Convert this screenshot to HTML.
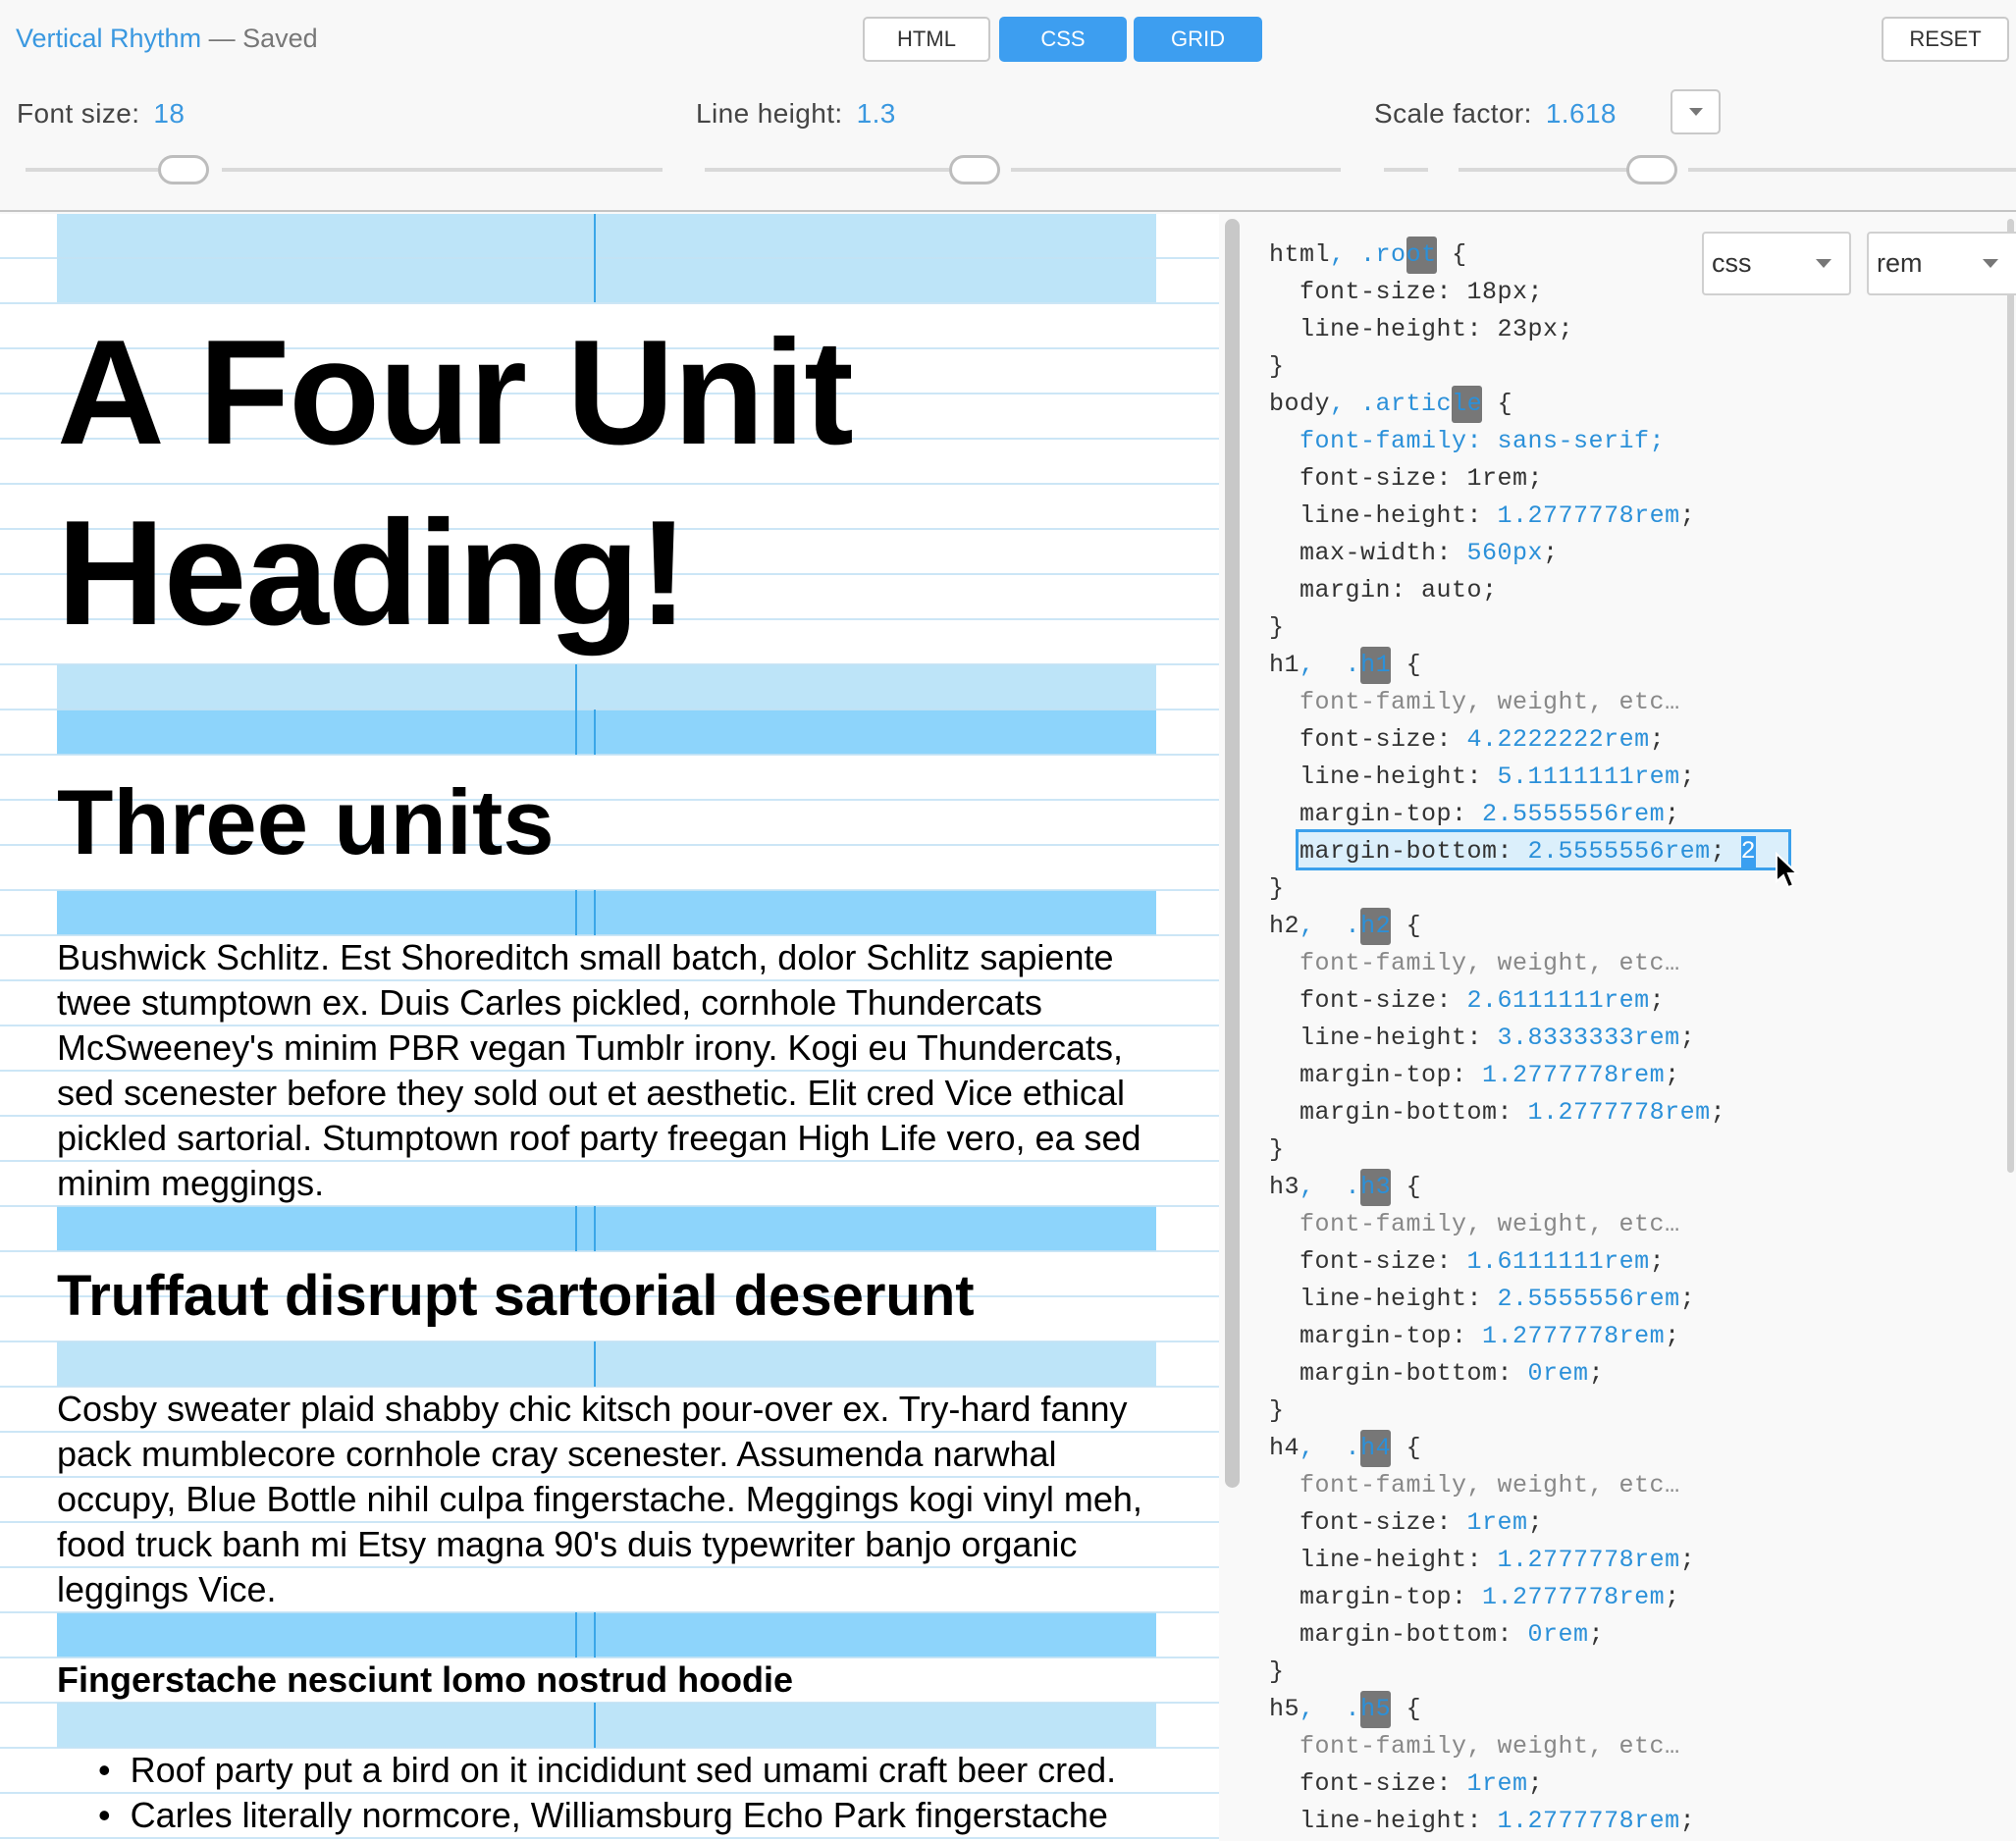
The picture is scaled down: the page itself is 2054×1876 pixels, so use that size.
<!DOCTYPE html>
<html><head><meta charset="utf-8"><style>
*{margin:0;padding:0;box-sizing:border-box}
body{width:2054px;height:1876px;overflow:hidden;background:#f9f9f9;font-family:"Liberation Sans",Arial,sans-serif;position:relative}
.top{position:absolute;left:0;top:0;width:2054px;height:216px;background:#f8f8f8;border-bottom:2px solid #c4c4c4}
.a{position:absolute}
.ui{font-family:"Liberation Sans",sans-serif;color:#333}
.btn{position:absolute;top:17px;height:46px;border:2px solid #c9c9c9;border-radius:5px;background:#fff;font-size:22px;color:#333;text-align:center;line-height:42px}
.btn.on{background:#3d9ef0;border-color:#3d9ef0;color:#fff}
.lbl{position:absolute;top:100px;font-size:28px;color:#444;letter-spacing:0.4px}
.lbl b{font-weight:normal;color:#3a98e0;margin-left:14px}
.track{position:absolute;top:171px;height:4px;background:#d9d9d9}
.thumb{position:absolute;top:158px;width:52px;height:30px;border:3px solid #bdbdbd;border-radius:15px;background:#fff}
.left{position:absolute;left:0;top:218px;width:1242px;height:1658px;background:#fff;overflow:hidden}
.grid{position:absolute;left:0;top:-2px;width:1242px;height:1660px;background:repeating-linear-gradient(to bottom,#c3e2f4 0,#c3e2f4 2px,transparent 2px,transparent 46px);z-index:3;opacity:.85}
.lb{position:absolute;left:58px;width:1120px;background:#bde4f8;z-index:1}
.db{position:absolute;left:58px;width:1120px;background:#8dd4fb;z-index:1}
.ar{position:absolute;width:2px;background:#3aa6e8;z-index:4}
.t{position:absolute;left:58px;color:#000;z-index:5;white-space:nowrap}
.code{position:absolute;font-family:"Liberation Mono",monospace;font-size:25px;color:#333;white-space:pre;height:38px;line-height:38px;left:1293px;letter-spacing:0.5px;margin-top:3px}
.c{color:#2b90d9}.g{color:#888}
.sel{display:inline-block;background:#777;color:#2b90d9;border-radius:3px}
.dd{position:absolute;top:236px;height:65px;border:2px solid #d0d0d0;border-radius:4px;background:#fff;font-size:27px;color:#333;line-height:60px;padding-left:8px}
.tri{position:absolute;right:18px;top:26px;width:0;height:0;border-left:8px solid transparent;border-right:8px solid transparent;border-top:9px solid #777}
</style></head><body>
<div class="top">
 <div class="a ui" style="left:16px;top:24px;font-size:27px"><span style="color:#3a98e0">Vertical Rhythm</span> <span style="color:#777">— Saved</span></div>
 <div class="btn" style="left:879px;width:130px">HTML</div>
 <div class="btn on" style="left:1018px;width:130px">CSS</div>
 <div class="btn on" style="left:1155px;width:131px">GRID</div>
 <div class="btn" style="left:1917px;width:130px">RESET</div>
 <div class="lbl" style="left:17px">Font size:<b>18</b></div>
 <div class="lbl" style="left:709px">Line height:<b>1.3</b></div>
 <div class="lbl" style="left:1400px">Scale factor:<b>1.618</b></div>
 <div class="a" style="left:1702px;top:91px;width:51px;height:46px;border:2px solid #c9c9c9;border-radius:5px;background:#fff"><div class="tri" style="right:16px;top:17px;border-top-color:#777;border-left-width:7px;border-right-width:7px;border-top-width:8px"></div></div>
 <div class="track" style="left:26px;width:135px"></div><div class="track" style="left:226px;width:449px"></div>
 <div class="thumb" style="left:161px"></div>
 <div class="track" style="left:718px;width:249px"></div><div class="track" style="left:1030px;width:336px"></div>
 <div class="thumb" style="left:967px"></div>
 <div class="track" style="left:1410px;width:45px"></div><div class="track" style="left:1486px;width:172px"></div><div class="track" style="left:1720px;width:334px"></div>
 <div class="thumb" style="left:1657px"></div>
</div>

<div class="left">
 <div class="grid"></div>
 <div class="lb" style="top:-2px;height:92px"></div>
 <div class="ar" style="left:605px;top:0;height:90px"></div>
 <div class="t" style="top:90px;font-size:152px;line-height:184px;font-weight:bold;letter-spacing:-1px">A Four Unit<br>Heading!</div>
 <div class="lb" style="top:459px;height:46px"></div>
 <div class="db" style="top:505px;height:46px"></div>
 <div class="ar" style="left:586px;top:459px;height:92px"></div>
 <div class="ar" style="left:605px;top:505px;height:46px"></div>
 <div class="t" style="top:551px;font-size:94px;line-height:138px;font-weight:bold">Three units</div>
 <div class="db" style="top:689px;height:46px"></div>
 <div class="ar" style="left:586px;top:689px;height:46px"></div><div class="ar" style="left:605px;top:689px;height:46px"></div>
 <div class="t" style="top:735px;font-size:36px;line-height:46px">Bushwick Schlitz. Est Shoreditch small batch, dolor Schlitz sapiente<br>twee stumptown ex. Duis Carles pickled, cornhole Thundercats<br>McSweeney's minim PBR vegan Tumblr irony. Kogi eu Thundercats,<br>sed scenester before they sold out et aesthetic. Elit cred Vice ethical<br>pickled sartorial. Stumptown roof party freegan High Life vero, ea sed<br>minim meggings.</div>
 <div class="db" style="top:1011px;height:46px"></div>
 <div class="ar" style="left:586px;top:1011px;height:46px"></div><div class="ar" style="left:605px;top:1011px;height:46px"></div>
 <div class="t" style="top:1057px;font-size:58px;line-height:92px;font-weight:bold">Truffaut disrupt sartorial deserunt</div>
 <div class="lb" style="top:1149px;height:46px"></div>
 <div class="ar" style="left:605px;top:1149px;height:46px"></div>
 <div class="t" style="top:1195px;font-size:36px;line-height:46px">Cosby sweater plaid shabby chic kitsch pour-over ex. Try-hard fanny<br>pack mumblecore cornhole cray scenester. Assumenda narwhal<br>occupy, Blue Bottle nihil culpa fingerstache. Meggings kogi vinyl meh,<br>food truck banh mi Etsy magna 90's duis typewriter banjo organic<br>leggings Vice.</div>
 <div class="db" style="top:1425px;height:46px"></div>
 <div class="ar" style="left:586px;top:1425px;height:46px"></div><div class="ar" style="left:605px;top:1425px;height:46px"></div>
 <div class="t" style="top:1471px;font-size:36px;line-height:46px;font-weight:bold">Fingerstache nesciunt lomo nostrud hoodie</div>
 <div class="lb" style="top:1517px;height:46px"></div>
 <div class="ar" style="left:605px;top:1517px;height:46px"></div>
 <div class="t" style="top:1563px;left:100px;font-size:36px;line-height:46px">•&nbsp;&nbsp;Roof party put a bird on it incididunt sed umami craft beer cred.<br>•&nbsp;&nbsp;Carles literally normcore, Williamsburg Echo Park fingerstache</div>
</div>

<div class="a" style="left:1248px;top:223px;width:15px;height:1293px;background:#c8c8c8;border-radius:8px"></div>
<div class="a" style="left:2045px;top:223px;width:7px;height:972px;background:#d0d0d0;border-radius:4px"></div>

<div class="dd" style="left:1734px;width:152px">css<div class="tri"></div></div>
<div class="dd" style="left:1902px;width:160px">rem<div class="tri" style="right:24px"></div></div>

<div class="a" style="left:1320px;top:845px;width:505px;height:42px;border:3px solid #3aa0ec;background:#dbeffb"></div>

<div class="code" style="top:238px">html<span class="c">,</span> <span class="c">.ro<span class="sel">ot</span></span> {</div>
<div class="code" style="top:276px">  font-size: 18px;</div>
<div class="code" style="top:314px">  line-height: 23px;</div>
<div class="code" style="top:352px">}</div>
<div class="code" style="top:390px">body<span class="c">,</span> <span class="c">.artic<span class="sel">le</span></span> {</div>
<div class="code c" style="top:428px">  font-family: sans-serif;</div>
<div class="code" style="top:466px">  font-size: 1rem;</div>
<div class="code" style="top:504px">  line-height: <span class="c">1.2777778rem</span>;</div>
<div class="code" style="top:542px">  max-width: <span class="c">560px</span>;</div>
<div class="code" style="top:580px">  margin: auto;</div>
<div class="code" style="top:618px">}</div>
<div class="code" style="top:656px">h1<span class="c">,</span>  <span class="c">.<span class="sel">h1</span></span> {</div>
<div class="code g" style="top:694px">  font-family, weight, etc…</div>
<div class="code" style="top:732px">  font-size: <span class="c">4.2222222rem</span>;</div>
<div class="code" style="top:770px">  line-height: <span class="c">5.1111111rem</span>;</div>
<div class="code" style="top:808px">  margin-top: <span class="c">2.5555556rem</span>;</div>
<div class="code" style="top:846px">  margin-bottom: <span class="c">2.5555556rem</span>; <span style="color:#fff;background:#3a9ff0;line-height:32px;display:inline-block">2</span></div>
<div class="code" style="top:884px">}</div>
<div class="code" style="top:922px">h2<span class="c">,</span>  <span class="c">.<span class="sel">h2</span></span> {</div>
<div class="code g" style="top:960px">  font-family, weight, etc…</div>
<div class="code" style="top:998px">  font-size: <span class="c">2.6111111rem</span>;</div>
<div class="code" style="top:1036px">  line-height: <span class="c">3.8333333rem</span>;</div>
<div class="code" style="top:1074px">  margin-top: <span class="c">1.2777778rem</span>;</div>
<div class="code" style="top:1112px">  margin-bottom: <span class="c">1.2777778rem</span>;</div>
<div class="code" style="top:1150px">}</div>
<div class="code" style="top:1188px">h3<span class="c">,</span>  <span class="c">.<span class="sel">h3</span></span> {</div>
<div class="code g" style="top:1226px">  font-family, weight, etc…</div>
<div class="code" style="top:1264px">  font-size: <span class="c">1.6111111rem</span>;</div>
<div class="code" style="top:1302px">  line-height: <span class="c">2.5555556rem</span>;</div>
<div class="code" style="top:1340px">  margin-top: <span class="c">1.2777778rem</span>;</div>
<div class="code" style="top:1378px">  margin-bottom: <span class="c">0rem</span>;</div>
<div class="code" style="top:1416px">}</div>
<div class="code" style="top:1454px">h4<span class="c">,</span>  <span class="c">.<span class="sel">h4</span></span> {</div>
<div class="code g" style="top:1492px">  font-family, weight, etc…</div>
<div class="code" style="top:1530px">  font-size: <span class="c">1rem</span>;</div>
<div class="code" style="top:1568px">  line-height: <span class="c">1.2777778rem</span>;</div>
<div class="code" style="top:1606px">  margin-top: <span class="c">1.2777778rem</span>;</div>
<div class="code" style="top:1644px">  margin-bottom: <span class="c">0rem</span>;</div>
<div class="code" style="top:1682px">}</div>
<div class="code" style="top:1720px">h5<span class="c">,</span>  <span class="c">.<span class="sel">h5</span></span> {</div>
<div class="code g" style="top:1758px">  font-family, weight, etc…</div>
<div class="code" style="top:1796px">  font-size: <span class="c">1rem</span>;</div>
<div class="code" style="top:1834px">  line-height: <span class="c">1.2777778rem</span>;</div>

<svg class="a" style="left:1808px;top:868px" width="26" height="40" viewBox="0 0 26 40"><path d="M2 2 L2 30 L9 24 L14 36 L19 34 L14 22 L23 22 Z" fill="#000" stroke="#fff" stroke-width="2"/></svg>
</body></html>
